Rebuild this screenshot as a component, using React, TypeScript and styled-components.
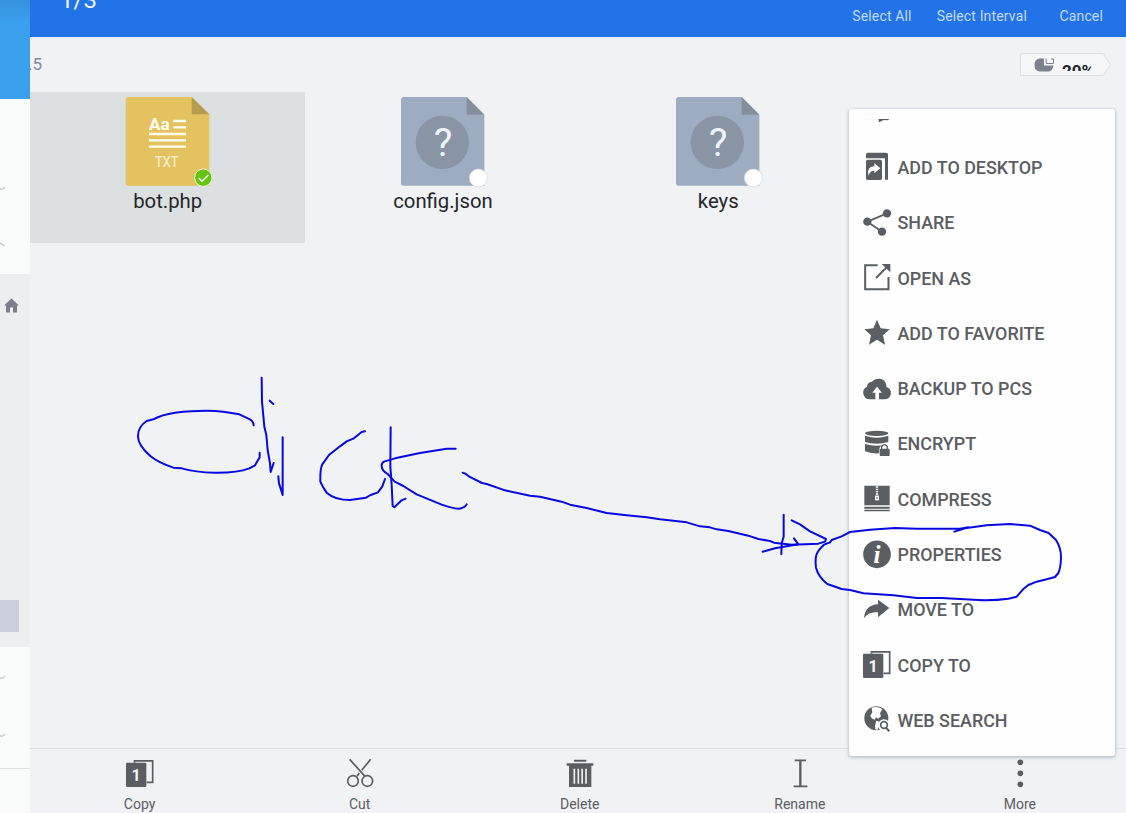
import React from "react";
import styled, { createGlobalStyle } from "styled-components";

const ink = "#5a5d61";

const GlobalStyle = createGlobalStyle`
  * { box-sizing: border-box; }
  body { margin: 0; background: #f0f2f4; font-family: Roboto, "Liberation Sans", sans-serif; }
`;

const Screen = styled.div`
  position: relative;
  display: grid;
  grid-template-columns: 30px 1fr;
  width: 1126px;
  height: 813px;
  overflow: hidden;
`;

const Sidebar = styled.aside`
  display: flex;
  flex-direction: column;
  background: #fafbfb;
`;

const SideBlock = styled.div<{ $h: number; $bg?: string; $line?: boolean }>`
  flex: none;
  height: ${(p) => p.$h}px;
  background: ${(p) => p.$bg ?? "transparent"};
  border-bottom: ${(p) => (p.$line ? "1px solid #dddfe1" : "none")};
`;

const SideSection = styled(SideBlock)<{ $top: number; $gap: number }>`
  display: flex;
  flex-direction: column;
  gap: ${(p) => p.$gap}px;
  padding-top: ${(p) => p.$top}px;
`;

const Chevron = styled.svg`
  display: block;
  flex: none;
  width: 6px;
  height: 5px;
`;

const HomeIcon = styled.svg`
  display: block;
  flex: none;
  width: 15px;
  height: 15px;
  margin-left: 4px;
`;

const SideThumb = styled.div`
  width: 19px;
  height: 32px;
  background: #cbcedb;
`;

const Main = styled.main`
  display: flex;
  flex-direction: column;
  min-width: 0;
  overflow: hidden;
`;

const Header = styled.header`
  display: flex;
  flex: none;
  justify-content: space-between;
  height: 37px;
  padding: 0 23px 0 30px;
  background: #2272e8;
  overflow: hidden;
`;

const Counter = styled.div`
  height: 28px;
  margin-top: -14px;
  color: #eef5ff;
  font-size: 24px;
  line-height: 28px;
`;

const Actions = styled.nav`
  display: flex;
  height: 32px;
  align-items: center;
`;

const Action = styled.span<{ $gap?: number }>`
  margin-left: ${(p) => p.$gap ?? 0}px;
  color: #c3dafa;
  font-size: 14px;
  letter-spacing: 0.15px;
  white-space: nowrap;
`;

const PathRow = styled.div`
  display: flex;
  flex: none;
  align-items: center;
  justify-content: space-between;
  height: 55px;
  padding-right: 15px;
`;

const Crumb = styled.span`
  margin: -2px 0 0 -2px;
  color: #85899a;
  font-size: 17px;
`;

const Usage = styled.div`
  position: relative;
  display: flex;
  width: 91px;
  height: 24px;
  padding: 5px 0 0 14px;
  gap: 7px;
`;

const UsageShape = styled.svg`
  position: absolute;
  inset: 0;
`;

const UsageIcon = styled.svg`
  position: relative;
  width: 21px;
  height: 14px;
`;

const UsageText = styled.span`
  position: relative;
  height: 13px;
  padding-top: 3px;
  overflow: hidden;
  color: #222529;
  font-size: 17px;
  font-weight: 700;
  line-height: 20px;
`;

const Files = styled.section`
  display: grid;
  flex: 1;
  grid-template-columns: repeat(3, 275.3px);
  align-items: start;
`;

const FileCell = styled.div<{ $selected?: boolean }>`
  display: flex;
  flex-direction: column;
  align-items: center;
  height: 151px;
  padding-top: 5px;
  background: ${(p) => (p.$selected ? "#dde0e1" : "transparent")};
`;

const FileArt = styled.svg`
  display: block;
  width: 84px;
  height: 89px;
  overflow: visible;
`;

const FileName = styled.span`
  margin-top: 2.5px;
  color: #24262a;
  font-size: 20.3px;
  line-height: 24px;
`;

const Toolbar = styled.footer`
  display: grid;
  flex: none;
  grid-template-columns: repeat(5, 220.1px);
  height: 65px;
  margin-left: -0.5px;
  border-top: 1px solid #dcdfe2;
`;

const Tool = styled.div`
  display: flex;
  flex-direction: column;
  align-items: center;
  padding-top: 11px;
  color: #5b5e65;
  font-size: 14px;
  line-height: 16px;
  gap: 8px;
`;

const Glyph = styled.svg`
  display: block;
  flex: none;
  width: 28px;
  height: 28px;
  overflow: visible;
`;

const Menu = styled.div`
  position: absolute;
  left: 849px;
  top: 109px;
  width: 265.5px;
  height: 646.5px;
  padding: 9.6px 0 7.4px;
  background: #fefefe;
  border-radius: 3px;
  box-shadow: 0 1px 3px 1px rgba(90, 95, 125, 0.3);
`;

const MenuList = styled.div`
  display: flex;
  flex-direction: column;
  justify-content: flex-end;
  height: 100%;
  overflow: hidden;
`;

const MenuItem = styled.div`
  display: flex;
  flex: none;
  align-items: center;
  height: 55.3px;
  padding-left: 14px;
  gap: 6.5px;
  color: ${ink};
  font-size: 17.9px;
  font-weight: 500;
  white-space: nowrap;
`;

const Ink = styled.svg`
  position: absolute;
  inset: 0;
  width: 1126px;
  height: 813px;
  pointer-events: none;
`;

const CopyArt = () => (
  <>
    <path d="M25.500 8V2.500H80V67H62" fill="none" stroke={ink} strokeWidth="5" />
    <rect x="0" y="8" width="61" height="73" rx="4" fill={ink} />
    <text x="30" y="62" textAnchor="middle" fontSize="48" fontWeight="700" fill="#f5f6f7">1</text>
  </>
);

const glyphs: Record<string, React.ReactNode> = {
  cutoff: (
    <>
      <path d="M3 62H46" stroke="#dcdde0" strokeWidth="2" />
      <path d="M46 61H80L75 67L62 66L48 73Z" fill={ink} />
    </>
  ),
  desktop: (
    <>
      <path d="M14 -1H70Q75 -1 75 4V80H66V16H9V4Q9 -1 14 -1Z" fill={ink} />
      <rect x="9" y="20" width="48" height="61" rx="5" fill={ink} />
      <path d="M34 31L52 46L34 61V53Q21 52 17 68Q9 42 34 40Z" fill="#fff" />
    </>
  ),
  share: (
    <>
      <path d="M72 13L13 38L57 68" fill="none" stroke={ink} strokeWidth="5.500" />
      <circle cx="72" cy="13" r="12.500" fill={ink} />
      <circle cx="13" cy="38" r="12.500" fill={ink} />
      <circle cx="57" cy="68" r="12.500" fill={ink} />
    </>
  ),
  open: (
    <>
      <path d="M44 4H6.500V76H76.500V39M39 42L70 11" fill="none" stroke={ink} strokeWidth="6" />
      <path d="M56 0H82V25Z" fill={ink} />
    </>
  ),
  star: <path d="M42 2L53 28L80 31L60 49L66 77L42 62L18 77L24 49L4 31L31 28Z" fill={ink} />,
  cloud: (
    <>
      <path d="M20 73A20 20 0 0 1 12 35Q13 21 27 20A24 22 0 0 1 69 26Q71 31 70 36A20 19 0 0 1 64 73Z" fill={ink} />
      <path d="M42 35L57 53H48V74H37V53H28Z" fill="#fff" />
    </>
  ),
  encrypt: (
    <>
      <ellipse cx="41" cy="10" rx="35" ry="8" fill={ink} />
      <path d="M6 17Q41 29 76 17V36Q41 46 6 36Z" fill={ink} />
      <path d="M6 42Q35 51 60 45Q49 50 49 57L48 70Q25 72 6 64Z" fill={ink} />
      <path d="M56 58V50Q65 38 73 50V58" fill="none" stroke={ink} strokeWidth="4" />
      <rect x="50" y="56" width="30" height="22" rx="3" fill={ink} />
    </>
  ),
  compress: (
    <>
      <path d="M4 2H80V61H4ZM4 65H80V71H4ZM4 74H80V79H4Z" fill={ink} />
      <path d="M42 4V34" stroke="#fff" strokeWidth="7" strokeDasharray="4 3" />
      <path d="M36 32H48V46H36Z" fill="#fff" />
      <path d="M42 36V42" stroke={ink} strokeWidth="3" />
    </>
  ),
  info: (
    <>
      <circle cx="42" cy="40" r="41.500" fill={ink} />
      <text x="42" y="66" textAnchor="middle" fontSize="76" fontStyle="italic" fontWeight="700" fontFamily="Liberation Serif, serif" fill="#fff">i</text>
    </>
  ),
  move: <path d="M45 11L79 36L45 64V49Q17 45 3 67Q6 27 45 25Z" fill={ink} />,
  copy: <CopyArt />,
  web: (
    <>
      <circle cx="40" cy="37" r="36" fill={ink} />
      <path d="M26 6Q37 1 50 5L58 10L51 22L54 31L45 38L39 34L35 41L26 37L22 29L28 19ZM40 44L46 46L50 54L43 72L37 70L36 59Z" fill="#fff" />
      <circle cx="63" cy="58" r="18" fill="#fff" />
      <circle cx="63" cy="57" r="10" fill="none" stroke={ink} strokeWidth="5" />
      <path d="M70 66L79 76" stroke={ink} strokeWidth="6" />
    </>
  ),
  cut: (
    <g fill="none" stroke={ink} strokeWidth="5">
      <path d="M11 -2L57 49M74 -2L47 31M40 39L33 49" />
      <circle cx="21" cy="63" r="16" />
      <circle cx="64" cy="63" r="16" />
    </g>
  ),
  remove: (
    <>
      <path d="M24 -1H61V5H24ZM2 10H82V17H76V81H9V17H2Z" fill={ink} />
      <path d="M25 26V71M37 26V71M48.500 26V71M60 26V71" stroke="#f0f2f4" strokeWidth="5" />
    </>
  ),
  rename: (
    <>
      <path d="M26 1H60M23 79H64" stroke={ink} strokeWidth="5" />
      <path d="M43 1V79" stroke={ink} strokeWidth="7" />
    </>
  ),
  more: (
    <g fill={ink}>
      <circle cx="43" cy="7" r="8.500" />
      <circle cx="43" cy="40" r="8.500" />
      <circle cx="43" cy="73" r="8.500" />
    </g>
  ),
};

const Icon = ({ name }: { name: string }) => <Glyph viewBox="0 0 84 84">{glyphs[name]}</Glyph>;

const UnknownFile = () => (
  <FileArt viewBox="0 0 252 267">
    <path d="M8 0H197L250 53V266H8Q0 266 0 258V8Q0 0 8 0Z" fill="#9dacc1" />
    <path d="M197 0L250 53H197Z" fill="#848e9c" />
    <circle cx="124" cy="136" r="80" fill="#8994a5" />
    <text x="126" y="176" textAnchor="middle" fontSize="118" fill="#eef4fb">?</text>
    <circle cx="232" cy="243" r="27" fill="#fff" stroke="#d5d9df" strokeWidth="2" />
  </FileArt>
);

const TextFile = () => (
  <FileArt viewBox="0 0 252 267">
    <path d="M8 0H197L250 52V266H8Q-1 266 -1 258V8Q-1 0 8 0Z" fill="#e4c25f" />
    <path d="M197 0L250 52H197Z" fill="#b69c50" />
    <text x="69" y="99" fontSize="51" fontWeight="700" fill="#fffdf3" textLength="62">Aa</text>
    <path d="M142 72H180M142 91H180M69 111H180M69 130H180M69 149H180" stroke="#fffdf3" strokeWidth="7" />
    <text x="87" y="209" fontSize="44" fontWeight="500" fill="#f7ebc8" textLength="70" lengthAdjust="spacingAndGlyphs">TXT</text>
    <circle cx="232" cy="242" r="26" fill="#64c50e" stroke="#f0f7dc" strokeWidth="3" />
    <path d="M218 243L228 253L247 234" fill="none" stroke="#fff" strokeWidth="4" />
  </FileArt>
);

const menuItems = [
  ["cutoff", ""],
  ["desktop", "ADD TO DESKTOP"],
  ["share", "SHARE"],
  ["open", "OPEN AS"],
  ["star", "ADD TO FAVORITE"],
  ["cloud", "BACKUP TO PCS"],
  ["encrypt", "ENCRYPT"],
  ["compress", "COMPRESS"],
  ["info", "PROPERTIES"],
  ["move", "MOVE TO"],
  ["copy", "COPY TO"],
  ["web", "WEB SEARCH"],
];

const tools = [
  ["copy", "Copy"],
  ["cut", "Cut"],
  ["remove", "Delete"],
  ["rename", "Rename"],
  ["more", "More"],
];

const Arrow = ({ up }: { up?: boolean }) => (
  <Chevron viewBox="0 0 6 5">
    <path d={up ? "M0 1.500H1L4.500 4" : "M0 3L2.500 3.200L5 1.200"} fill="none" stroke="#c3c6c9" strokeWidth="1.300" />
  </Chevron>
);

export default function App() {
  return (
    <>
      <GlobalStyle />
      <Screen>
        <Sidebar>
          <SideBlock $h={99} $bg="linear-gradient(#3692dc, #3a9fec 22px)" />
          <SideSection $h={175} $top={87} $gap={51}>
            <Arrow />
            <Arrow up />
          </SideSection>
          <SideSection $h={373} $bg="#eceeef" $top={24} $gap={287}>
            <HomeIcon viewBox="0 0 15 15">
              <path d="M7.500 0.500L15 7.500H13V14.500H9V9.500H6V14.500H2V7.500H0Z" fill="#7b7f8b" />
            </HomeIcon>
            <SideThumb />
          </SideSection>
          <SideSection $h={122} $line $top={28} $gap={53}>
            <Arrow />
            <Arrow />
          </SideSection>
        </Sidebar>
        <Main>
          <Header>
            <Counter>1/3</Counter>
            <Actions>
              <Action>Select All</Action>
              <Action $gap={25}>Select Interval</Action>
              <Action $gap={32.5}>Cancel</Action>
            </Actions>
          </Header>
          <PathRow>
            <Crumb>.5</Crumb>
            <Usage>
              <UsageShape width="91" height="24" viewBox="0 0 91 24">
                <path d="M2 0.500H83L90.500 11.500L83 22.500H2Q0.500 22.500 0.500 21V2Q0.500 0.500 2 0.500Z" fill="#f6f7f8" stroke="#dcdee0" />
              </UsageShape>
              <UsageIcon viewBox="0 0 21 14">
                <path d="M6 0.500H10V7.500H19.500Q18.500 13.500 14 13.500H6Q0.500 13 0.500 7Q0.500 1 6 0.500Z" fill="#7e828e" />
                <path d="M12.200 0.500V5.500H19.500V1H17" fill="none" stroke="#7e828e" />
              </UsageIcon>
              <UsageText>20%</UsageText>
            </Usage>
          </PathRow>
          <Files>
            <FileCell $selected>
              <TextFile />
              <FileName>bot.php</FileName>
            </FileCell>
            <FileCell>
              <UnknownFile />
              <FileName>config.json</FileName>
            </FileCell>
            <FileCell>
              <UnknownFile />
              <FileName>keys</FileName>
            </FileCell>
          </Files>
          <Toolbar>
            {tools.map(([icon, label]) => (
              <Tool key={label}>
                <Icon name={icon} />
                {label}
              </Tool>
            ))}
          </Toolbar>
        </Main>
        <Menu>
          <MenuList>
            {menuItems.map(([icon, label]) => (
              <MenuItem key={icon}>
                <Icon name={icon} />
                {label}
              </MenuItem>
            ))}
          </MenuList>
        </Menu>
        <Ink viewBox="0 0 3378 2439">
          <g fill="none" stroke="#0808e0" strokeWidth="6" strokeLinecap="round" strokeLinejoin="round">
            <g transform="translate(360 1080)">
              <path d="M401 196Q400 182 385 176L358 163L310 155Q250 149 165 158Q125 164 100 178L80 183Q54 200 54 228Q53 255 92 289Q115 308 160 323L185 325Q225 337 285 338Q350 339 388 325L405 316L419 292V278" />
              <path d="M425 53L426 125L433 200L439 225L443 270L450 310L452 336L461 309" />
              <path d="M449 122L460 132" />
              <path d="M488 232V405L477 370L475 349" />
              <path d="M735 214L725 216L700 236L680 244L660 259L627 285L607 313Q600 325 601 365L609 381L620 398Q645 420 690 420L738 413L752 405L774 397L787 379L795 357" />
              <path d="M812 202L811 320L815 375L818 438L823 442L845 421L857 416" />
              <path d="M1007 266H980L900 279L825 295L792 305Q784 309 785 319Q786 332 803 342L824 365L850 378L890 403L965 434Q1002 447 1018 446Q1036 442 1040 433" />
            </g>
            <g transform="translate(1380 1350)">
              <path d="M8 68L18 72L28 80L66 99L80 102L135 121L210 137L240 140L305 155L330 164L380 174L440 189L500 196L560 202L600 208L680 217L720 229L750 232L770 238L805 243L865 257L895 267L930 273L942 278L995 284L1075 281L1095 275L1098 267L1050 244L1020 223L995 211" />
              <path d="M971 194V260L965 280L964 313" />
              <path d="M908 305L945 295L1015 283L1002 265" />
            </g>
            <g transform="translate(2400 1530)">
              <path d="M463 65L495 55L560 46L630 42L690 47L720 60L746 69L768 90Q784 115 783 145Q782 175 775 189L765 201L740 208L710 215L685 225L671 236L650 260L625 266Q580 272 535 270L425 264L350 264L280 256L190 250L150 240L125 237L82 222Q55 200 48 173Q45 150 49 135Q54 120 72 104L90 97L95 90L125 79L150 66L210 59L285 54L350 56L480 56L505 52" />
            </g>
          </g>
        </Ink>
      </Screen>
    </>
  );
}
